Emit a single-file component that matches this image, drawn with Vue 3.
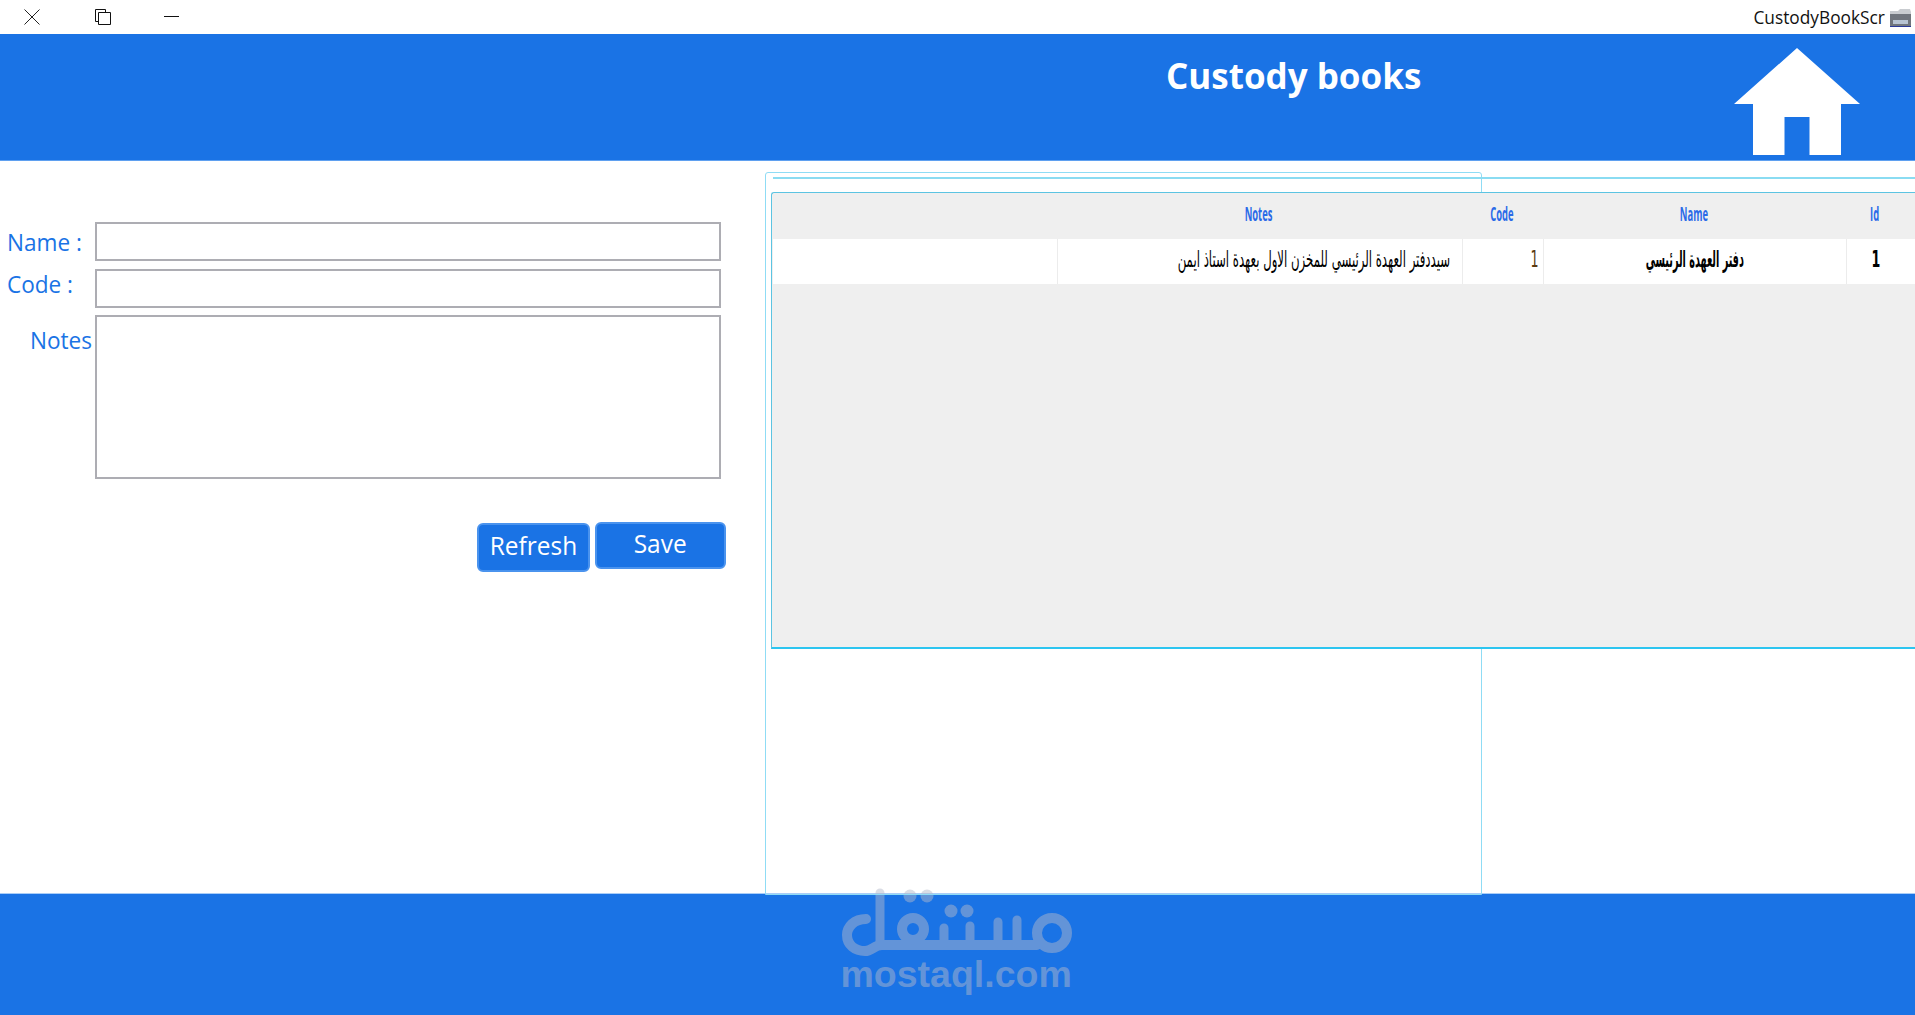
<script setup>
const columns = [
  { key: 'blank', title: '', value: '', width: 284 },
  { key: 'notes', title: 'Notes', value: 'سيددفتر العهدة الرئيسي للمخزن الاول بعهدة استاذ ايمن', width: 405 },
  { key: 'code', title: 'Code', value: '1', width: 81 },
  { key: 'name', title: 'Name', value: 'دفتر العهدة الرئيسي', width: 303 },
  { key: 'id', title: 'Id', value: '1', width: 59 },
]

const gridColumns = columns.map((c) => `${c.width}px`).join(' ')
</script>

<template>
  <div class="page">
    <div class="titlebar">
      <div class="window-buttons">
        <svg width="16" height="16" viewBox="0 0 16 16"><path d="M.5.5l15 15M15.5.5l-15 15" stroke="#222" stroke-width="1" fill="none" /></svg>
        <svg width="16" height="16" viewBox="0 0 16 16"><path d="M3.500 3.500h12v12h-12zM3.500 12.500H.5V.5h10v3" stroke="#111" stroke-width="1" fill="none" /></svg>
        <svg width="16" height="16" viewBox="0 0 16 16"><path d="M0 7.500h15" stroke="#111" stroke-width="1" fill="none" /></svg>
      </div>
      <div class="app-name">
        <span>CustodyBookScr</span>
        <svg width="23" height="20" viewBox="0 0 23 20">
          <path d="M1 3h8l2-2h10l1 3v14H1z" fill="#c9ccd0" />
          <rect x="1" y="6" width="21" height="12" fill="#70757d" />
          <rect x="4" y="12" width="15" height="4" fill="#b7c3d2" />
          <rect x="1" y="18" width="21" height="1" fill="#2a3a9a" />
        </svg>
      </div>
    </div>

    <header class="header">
      <h1 class="title">Custody books</h1>
      <svg class="home" width="126" height="107" viewBox="0 0 126 107">
        <path fill-rule="evenodd" d="M63 0L126 56H107V107H75.500V69H50.500V107H19V56H0Z" fill="#fff" />
      </svg>
    </header>

    <main class="body">
      <form class="form" @submit.prevent>
        <div class="fields">
          <label class="label label-name"><span>Name :</span></label>
          <input class="field" type="text" />
          <label class="label label-code"><span>Code :</span></label>
          <input class="field" type="text" />
          <label class="label label-notes"><span>Notes</span></label>
          <textarea class="field notes-field"></textarea>
        </div>
        <div class="actions">
          <button class="btn btn-refresh" type="button"><span>Refresh</span></button>
          <button class="btn btn-save" type="button"><span>Save</span></button>
        </div>
      </form>

      <section class="panel">
        <div class="frame"></div>
        <div class="panel-line"></div>
        <div class="table">
          <div class="row head" :style="{ gridTemplateColumns: gridColumns }">
            <div v-for="col in columns" :key="col.key" class="cell">
              <span class="squeeze">{{ col.title }}</span>
            </div>
          </div>
          <div class="row data" :style="{ gridTemplateColumns: gridColumns }">
            <div v-for="col in columns" :key="col.key" class="cell" :class="`cell-${col.key}`">
              <span class="squeeze">{{ col.value }}</span>
            </div>
          </div>
        </div>
      </section>
    </main>

    <footer class="footer">
      <svg class="watermark" width="250" height="125" viewBox="0 0 250 125">
        <g opacity="0.48">
          <g fill="none" stroke="#b4b9ca" stroke-width="10" stroke-linecap="round">
            <path d="M36 39C24 39 17 47 17 55C17 65 25 71 35 71C42 71 44 65 52 65H207" />
            <circle cx="83" cy="49" r="11" />
            <circle cx="222" cy="53" r="15" />
          </g>
          <g fill="none" stroke="#b4b9ca" stroke-width="9" stroke-linecap="round">
            <path d="M50 13V63M114 48V63M140 46V63M168 42V63M187 40V63" />
          </g>
          <g fill="#b4b9ca">
            <circle cx="80" cy="16" r="6.500" />
            <circle cx="97" cy="16" r="6.500" />
            <circle cx="121" cy="31" r="6.500" />
            <circle cx="137" cy="31" r="6.500" />
          </g>
          <text x="10.500" y="107" class="watermark-text">mostaql.com</text>
        </g>
      </svg>
    </footer>
  </div>
</template>

<style>
html,
body {
  margin: 0;
  background: #fff;
}
</style>

<style scoped>
.page {
  width: 1915px;
  height: 1015px;
  display: flex;
  flex-direction: column;
  overflow: hidden;
  font-family: "Open Sans", "Noto Sans", sans-serif;
  background: #fff;
}

.titlebar {
  height: 34px;
  display: flex;
  justify-content: space-between;
  align-items: flex-start;
}

.window-buttons {
  display: flex;
  gap: 55px;
  padding: 9px 0 0 24px;
}

.window-buttons svg:nth-child(3) {
  margin-left: -2px;
}

.app-name {
  display: flex;
  align-items: center;
  gap: 4px;
  padding: 7px 3px 0 0;
  font-size: 18px;
  line-height: 21px;
  color: #111;
}

.app-name span {
  display: inline-block;
  transform: scaleX(0.96);
  transform-origin: right center;
}

.header {
  height: 126px;
  flex: none;
  background: #1a73e5;
  border-bottom: 1px solid #5fa0f0;
  display: flex;
  align-items: flex-start;
}

.title {
  margin: 17px 0 0 1166px;
  width: 568px;
  font-size: 35px;
  line-height: 50px;
  font-weight: 700;
  color: #fff;
}

.home {
  margin-top: 14px;
}

.body {
  flex: 1;
  position: relative;
  z-index: 1;
  display: flex;
}

.form {
  width: 771px;
  flex: none;
  padding-top: 61px;
  box-sizing: border-box;
}

.fields {
  width: 721px;
  display: grid;
  grid-template-columns: 95px 626px;
  grid-template-rows: 39px 39px 164px;
  row-gap: 8px;
}

.label {
  font-size: 24px;
  line-height: 32px;
  color: #1a73e5;
}

.label span {
  display: inline-block;
  transform: scaleX(0.94);
  transform-origin: left center;
}

.label-name {
  padding: 4px 0 0 7px;
}

.label-code {
  margin-top: -1px;
  padding-left: 7px;
}

.label-notes {
  padding: 8px 0 0 30px;
}

.field {
  display: block;
  width: 100%;
  height: 100%;
  margin: 0;
  padding: 0;
  box-sizing: border-box;
  border: 2px solid #adadb3;
  border-radius: 0;
  background: #fff;
  resize: none;
  outline: none;
}

.notes-field {
  margin-top: -1px;
}

.actions {
  width: 726px;
  margin-top: 42px;
  display: flex;
  justify-content: flex-end;
  align-items: flex-start;
  gap: 5px;
}

.btn {
  margin: 0;
  padding: 0 0 5px;
  border: 2px solid #4a93ee;
  border-radius: 6px;
  background: #1a73e5;
  color: #fff;
  font-family: inherit;
  font-size: 26px;
  line-height: 34px;
}

.btn span {
  display: inline-block;
  transform: scaleX(0.94);
}

.btn-refresh {
  width: 113px;
  height: 49px;
  margin-top: 1px;
}

.btn-save {
  width: 131px;
  height: 47px;
}

.panel {
  flex: 1;
  min-width: 0;
  padding-top: 16px;
}

.frame {
  position: absolute;
  left: 765px;
  top: 11px;
  width: 717px;
  height: 723px;
  box-sizing: border-box;
  border: 1px solid #8fdcf5;
  border-radius: 3px 3px 0 0;
}

.panel-line {
  position: relative;
  margin-left: 2px;
  height: 2px;
  background: #8adcf2;
}

.table {
  position: relative;
  margin-top: 13px;
  height: 457px;
  box-sizing: border-box;
  padding-left: 1px;
  background: #efefef;
  border-top: 1px solid #5cc4e2;
  border-left: 1px solid #5cc4e2;
  border-bottom: 2px solid #2cc5f0;
  border-top-left-radius: 3px;
}

.row {
  display: grid;
}

.head {
  height: 46px;
}

.head .cell {
  display: flex;
  align-items: center;
  justify-content: center;
  padding: 0 2px 5px 0;
  font-size: 20px;
  font-weight: 700;
  color: #2a6ae8;
}

.head .squeeze {
  transform: scaleX(0.47);
}

.data {
  height: 45px;
  background: #fff;
}

.data .cell {
  display: flex;
  align-items: center;
  justify-content: center;
  padding-bottom: 6px;
  border-left: 1px solid #ececec;
  font-family: "DejaVu Sans", sans-serif;
  font-size: 23px;
  line-height: 36px;
  color: #000;
}

.data .cell:first-child {
  border-left: 0;
}

.squeeze {
  display: inline-block;
  white-space: nowrap;
}

.cell-notes {
  justify-content: flex-end !important;
  padding-right: 12px;
}

.cell-notes .squeeze {
  transform: scaleX(0.51);
  transform-origin: right center;
}

.cell-code {
  justify-content: flex-end !important;
  padding-right: 4px;
}

.cell-code .squeeze {
  transform: scaleX(0.55);
  transform-origin: right center;
  color: #5a3a10;
}

.cell-name {
  font-weight: 700;
}

.cell-name .squeeze {
  transform: scaleX(0.42);
}

.cell-id {
  font-weight: 700;
}

.cell-id .squeeze {
  transform: scaleX(0.55);
}

.footer {
  position: relative;
  height: 122px;
  flex: none;
  box-sizing: border-box;
  background: #1a73e5;
  border-top: 1px solid #a9cdf8;
}

.watermark {
  position: absolute;
  left: 830px;
  top: -14px;
  overflow: visible;
}

.watermark-text {
  font-family: "Liberation Sans", Arial, sans-serif;
  font-size: 37.500px;
  font-weight: 700;
  fill: #b4b9ca;
}
</style>
